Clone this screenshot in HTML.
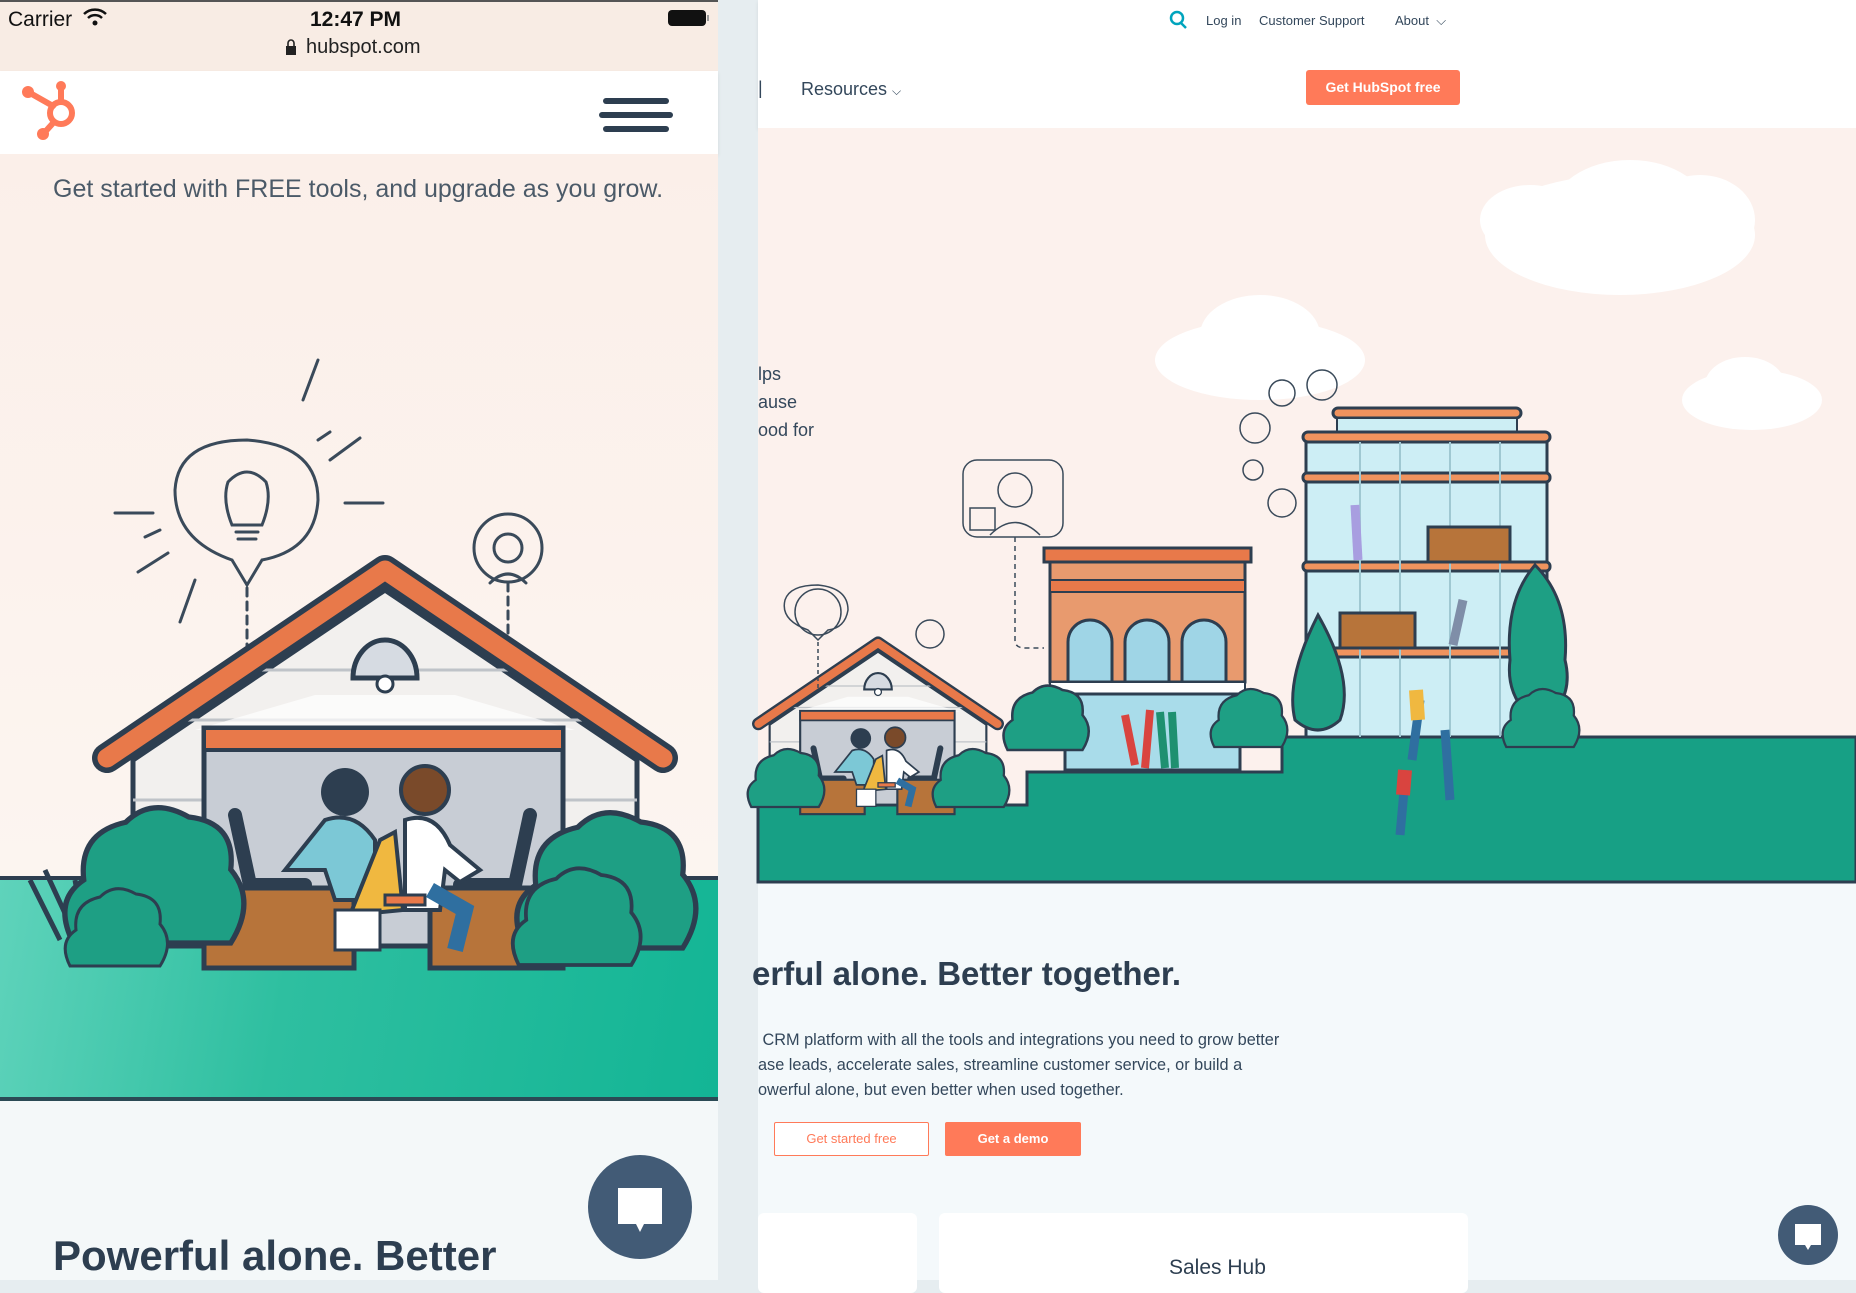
<!DOCTYPE html>
<html><head><meta charset="utf-8"><style>
*{margin:0;padding:0;box-sizing:border-box}
body{width:1856px;height:1280px;overflow:hidden;position:relative;font-family:"Liberation Sans",sans-serif;background:#e6edf0}
.a{position:absolute}
.t{position:absolute;white-space:nowrap}
</style></head><body>
<div class="a" style="left:0;top:0;width:718px;height:71px;background:#f8ece4;border-top:2px solid #555"></div>
<div class="a" style="left:0;top:71px;width:718px;height:83px;background:#fff;box-shadow:0 2px 4px rgba(0,0,0,.08)"></div>
<div class="a" style="left:0;top:154px;width:718px;height:722px;background:linear-gradient(#fbefe9,#fcf5f0)"></div>
<div class="a" style="left:0;top:876px;width:718px;height:225px;background:linear-gradient(100deg,#5fd3bb,#2ebfa0 40%,#13b595);border-top:4px solid #2d3e50;border-bottom:4px solid #2b4a55"></div>
<div class="a" style="left:0;top:1101px;width:718px;height:179px;background:#f4f8f9"></div>
<div class="a" style="left:758px;top:0;width:1098px;height:128px;background:#fff;box-shadow:0 2px 4px rgba(0,0,0,.08)"></div>
<div class="a" style="left:758px;top:128px;width:1098px;height:754px;background:#fcf1ed"></div>
<div class="a" style="left:758px;top:882px;width:1098px;height:398px;background:#f4f9fb"></div>

<svg class="a" style="left:0;top:0" width="1856" height="1280" viewBox="0 0 1856 1280">
<defs>
<g id="house">
 <polygon points="0,20 -252,190 -252,376 252,376 252,190" fill="#f2f0ee" stroke="#2d3e50" stroke-width="5"/>
 <g stroke="#bfc3c8" stroke-width="3"><line x1="-170" y1="100" x2="170" y2="100"/><line x1="-230" y1="150" x2="230" y2="150"/><line x1="-252" y1="230" x2="252" y2="230"/><line x1="-252" y1="290" x2="252" y2="290"/></g>
 <path d="M-70 125 L-190 160 L190 160 L70 125Z" fill="#fff" opacity=".7"/>
 <path d="M-32 108 A32 38 0 0 1 32 108 Z" fill="#d6dbe2" stroke="#2d3e50" stroke-width="5"/>
 <circle cx="0" cy="114" r="8" fill="#fff" stroke="#2d3e50" stroke-width="3"/>
 <rect x="-181" y="158" width="359" height="218" fill="#c8cdd5" stroke="#2d3e50" stroke-width="5"/>
 <rect x="-181" y="158" width="359" height="22" fill="#e8794a" stroke="#2d3e50" stroke-width="4"/>
 <path d="M-150 245 L-135 315 L-80 315" fill="none" stroke="#2d3e50" stroke-width="14" stroke-linecap="round"/>
 <path d="M145 245 L130 315 L75 315" fill="none" stroke="#2d3e50" stroke-width="14" stroke-linecap="round"/>
 <rect x="-181" y="318" width="150" height="80" fill="#b7743a" stroke="#2d3e50" stroke-width="5"/>
 <rect x="45" y="318" width="133" height="80" fill="#b7743a" stroke="#2d3e50" stroke-width="5"/>
 <circle cx="-40" cy="222" r="24" fill="#2d3e50"/>
 <path d="M-60 250 Q-30 240 -10 270 L-10 330 L-50 330 L-60 300 L-100 300 Z" fill="#7cc8d6" stroke="#2d3e50" stroke-width="4"/>
 <path d="M-5 270 L10 262 L18 340 L-35 345 Z" fill="#f0b840" stroke="#2d3e50" stroke-width="4"/>
 <rect x="-50" y="340" width="45" height="40" fill="#fff" stroke="#2d3e50" stroke-width="3"/>
 <circle cx="40" cy="220" r="24" fill="#7a4a2a" stroke="#2d3e50" stroke-width="4"/>
 <path d="M20 250 Q50 240 65 275 L95 300 L75 312 L60 300 L55 340 L20 340 Z" fill="#fff" stroke="#2d3e50" stroke-width="4"/>
 <rect x="0" y="325" width="40" height="10" fill="#e8794a" stroke="#2d3e50" stroke-width="3"/>
 <path d="M45 320 L80 340 L70 380" fill="none" stroke="#2f6fa0" stroke-width="16"/>
 <polyline points="-278,188 0,0 278,188" fill="none" stroke="#2d3e50" stroke-width="30" stroke-linecap="round" stroke-linejoin="round"/>
 <polyline points="-278,188 0,0 278,188" fill="none" stroke="#e8794a" stroke-width="19" stroke-linecap="round" stroke-linejoin="round"/>
</g>
<g id="bush">
 <path d="M-75 60 Q-95 20 -65 0 Q-70 -45 -25 -55 Q0 -80 35 -60 Q80 -55 75 -10 Q100 20 75 60 Z" fill="#1e9f84" stroke="#2d3e50" stroke-width="5"/>
</g>
</defs>

<g fill="none" stroke="#3a4a5a" stroke-width="3" stroke-linecap="round">
 <path d="M247 585 L232 560 Q175 540 175 490 Q178 440 247 440 Q318 445 318 500 Q315 550 262 560 Z"/>
 <path d="M232 525 Q222 500 228 482 Q247 462 266 482 Q272 500 262 525 Z M236 525 h22 M236 532 h22 M238 539 h18"/>
 <line x1="115" y1="513" x2="153" y2="513"/><line x1="345" y1="503" x2="383" y2="503"/>
 <line x1="303" y1="400" x2="318" y2="360"/><line x1="330" y1="460" x2="360" y2="438"/><line x1="318" y1="440" x2="330" y2="432"/>
 <line x1="138" y1="572" x2="168" y2="553"/><line x1="180" y1="622" x2="195" y2="580"/><line x1="145" y1="537" x2="160" y2="530"/>
 <circle cx="508" cy="548" r="34"/>
 <circle cx="508" cy="548" r="14"/><path d="M490 583 Q508 565 526 583"/>
 <line x1="247" y1="588" x2="247" y2="690" stroke-dasharray="8 6"/>
 <line x1="508" y1="583" x2="508" y2="800" stroke-dasharray="8 6"/>
</g>
<use href="#house" transform="translate(385,570)"/>
<path d="M30 880 L60 940 M45 870 L75 935 M75 880 L85 935" stroke="#2d3e50" stroke-width="5" fill="none"/>
<use href="#bush" transform="translate(152,880) scale(1.05)"/>
<use href="#bush" transform="translate(115,930) scale(.6)" />
<use href="#bush" transform="translate(604,885) scale(1.05)"/>
<use href="#bush" transform="translate(575,920) scale(.75)"/>

<g fill="#fff">
 <ellipse cx="1620" cy="235" rx="135" ry="60"/><ellipse cx="1630" cy="215" rx="80" ry="55"/><ellipse cx="1530" cy="220" rx="50" ry="35"/><ellipse cx="1700" cy="220" rx="55" ry="45"/>
 <ellipse cx="1752" cy="400" rx="70" ry="30"/><ellipse cx="1745" cy="385" rx="40" ry="28"/>
 <ellipse cx="1260" cy="360" rx="105" ry="40"/><ellipse cx="1260" cy="335" rx="60" ry="40"/>
</g>
<path d="M758 805 L1027 805 L1027 772 L1282 772 L1282 737 L1856 737 L1856 882 L758 882 Z" fill="#17a085" stroke="#2d3e50" stroke-width="3"/>
<line x1="758" y1="882" x2="1856" y2="882" stroke="#2d3e50" stroke-width="3"/>
<use href="#house" transform="translate(878,643) scale(.43)"/>
<use href="#bush" transform="translate(785,780) scale(.45)"/>
<use href="#bush" transform="translate(970,780) scale(.45)"/>
<g fill="none" stroke="#3a4a5a" stroke-width="1.5">
 <circle cx="818" cy="612" r="23"/><path d="M818 640 L808 630 Q780 620 785 600 Q790 585 818 585 Q848 588 848 610 Q845 628 828 630Z"/>
 <circle cx="930" cy="634" r="14"/>
 <line x1="818" y1="642" x2="818" y2="690" stroke-dasharray="4 3"/>
 <rect x="963" y="460" width="100" height="77" rx="14"/>
 <circle cx="1015" cy="490" r="17"/><path d="M990 535 Q1015 510 1040 535"/>
 <rect x="970" y="508" width="25" height="22"/>
 <path d="M1015 537 L1015 640 Q1015 648 1025 648 L1044 648" stroke-dasharray="5 4"/>
</g>
<rect x="1044" y="548" width="207" height="14" fill="#e8794a" stroke="#2d3e50" stroke-width="3"/>
<rect x="1050" y="562" width="195" height="120" fill="#e89a6e" stroke="#2d3e50" stroke-width="3"/>
<rect x="1050" y="580" width="195" height="12" fill="#e8794a" stroke="#2d3e50" stroke-width="2"/>
<g fill="#9fd5e6" stroke="#2d3e50" stroke-width="3">
 <path d="M1068 682 V642 A22 22 0 0 1 1112 642 V682Z"/>
 <path d="M1125 682 V642 A22 22 0 0 1 1169 642 V682Z"/>
 <path d="M1182 682 V642 A22 22 0 0 1 1226 642 V682Z"/>
</g>
<rect x="1050" y="682" width="195" height="12" fill="#fff" stroke="#2d3e50" stroke-width="2"/>
<rect x="1065" y="694" width="175" height="76" fill="#a9dcea" stroke="#2d3e50" stroke-width="3"/>
<path d="M1125 715 l10 50 M1150 710 l-5 58" stroke="#d9443f" stroke-width="8"/>
<path d="M1160 712 l5 56 M1172 712 l3 56" stroke="#1e9070" stroke-width="8"/>
<rect x="1333" y="408" width="188" height="10" rx="5" fill="#f0935e" stroke="#2d3e50" stroke-width="3"/>
<rect x="1337" y="418" width="180" height="14" fill="#cdeef4" stroke="#2d3e50" stroke-width="2"/>
<rect x="1303" y="432" width="247" height="10" rx="5" fill="#f0935e" stroke="#2d3e50" stroke-width="3"/>
<rect x="1306" y="442" width="241" height="295" fill="#cdeef5" stroke="#2d3e50" stroke-width="3"/>
<g fill="#f0935e" stroke="#2d3e50" stroke-width="3">
 <rect x="1303" y="473" width="247" height="9" rx="4"/>
 <rect x="1303" y="562" width="247" height="9" rx="4"/>
 <rect x="1303" y="648" width="247" height="9" rx="4"/>
</g>
<g stroke="#9fc8d2" stroke-width="2"><line x1="1360" y1="442" x2="1360" y2="737"/><line x1="1400" y1="442" x2="1400" y2="737"/><line x1="1450" y1="442" x2="1450" y2="737"/><line x1="1500" y1="442" x2="1500" y2="737"/></g>
<rect x="1428" y="527" width="82" height="35" fill="#b7743a" stroke="#2d3e50" stroke-width="3"/>
<rect x="1340" y="613" width="75" height="35" fill="#b7743a" stroke="#2d3e50" stroke-width="3"/>
<path d="M1355 505 l3 55" stroke="#a89ee0" stroke-width="9"/>
<path d="M1463 600 l-10 45" stroke="#7f8ea8" stroke-width="9"/>
<path d="M1420 700 l-8 60 M1445 730 l5 70 M1405 780 l-5 55" stroke="#2f6fa0" stroke-width="9"/>
<path d="M1416 690 l2 30" stroke="#f0b840" stroke-width="14"/>
<path d="M1405 770 l-2 25" stroke="#d9443f" stroke-width="14"/>
<path d="M1318 615 Q1355 680 1340 720 Q1318 740 1295 720 Q1285 680 1318 615Z" fill="#1e9f84" stroke="#2d3e50" stroke-width="3"/>
<path d="M1535 565 Q1570 600 1565 660 Q1575 700 1540 725 Q1505 700 1510 660 Q1505 600 1535 565Z" fill="#1e9f84" stroke="#2d3e50" stroke-width="3"/>
<use href="#bush" transform="translate(1045,720) scale(.5)"/>
<use href="#bush" transform="translate(1248,720) scale(.45)"/>
<use href="#bush" transform="translate(1540,720) scale(.45)"/>
<g fill="none" stroke="#3a4a5a" stroke-width="1.5">
 <circle cx="1282" cy="393" r="13"/><circle cx="1255" cy="428" r="15"/><circle cx="1253" cy="470" r="10"/><circle cx="1282" cy="503" r="14"/><circle cx="1322" cy="385" r="15"/>
</g>
<circle cx="640" cy="1207" r="52" fill="#425b76"/>
<path d="M618 1188 h44 v36 h-18 l-4 8 l-4 -8 h-18Z" fill="#fff"/>
<circle cx="1808" cy="1235" r="30" fill="#425b76"/>
<path d="M1795 1224 h26 v21 h-10 l-3 5 l-3 -5 h-10Z" fill="#fff"/>
<g stroke="#ff7a59" stroke-width="6" fill="none" stroke-linecap="round">
 <circle cx="61" cy="113" r="11"/><line x1="61" y1="102" x2="61" y2="87"/><line x1="53" y1="106" x2="30" y2="93"/><line x1="54" y1="122" x2="45" y2="132"/>
</g>
<g fill="#ff7a59"><circle cx="61" cy="86" r="5"/><circle cx="28" cy="92" r="6"/><circle cx="43" cy="134" r="6"/></g>
<g stroke="#2d3e50" stroke-width="6" stroke-linecap="round"><line x1="606" y1="101" x2="666" y2="101"/><line x1="602" y1="115" x2="670" y2="115"/><line x1="606" y1="129" x2="666" y2="129"/></g>
<circle cx="1177" cy="18" r="6" fill="none" stroke="#00a4bd" stroke-width="2.5"/><line x1="1181" y1="23" x2="1186" y2="28" stroke="#00a4bd" stroke-width="2.5"/>
<rect x="668" y="10" width="38" height="16" rx="4" fill="#111"/><rect x="707" y="15" width="2" height="6" fill="#999"/>
<rect x="286" y="46" width="10" height="9" fill="#222"/><path d="M288 46 v-3 a3 3 0 0 1 6 0 v3" stroke="#222" stroke-width="1.6" fill="none"/>
<path d="M84 14 a16 16 0 0 1 22 0 M88 18 a10 10 0 0 1 14 0" stroke="#111" stroke-width="2.5" fill="none"/><circle cx="95" cy="23" r="2.5" fill="#111"/>
<circle cx="1148" cy="1268" r="8" fill="none" stroke="#2d3e50" stroke-width="2.5"/><path d="M1148 1272 l-4 8 h8z" fill="#ff7a59"/>
</svg>

<div class="t" style="left:8px;top:8px;font-size:21px;color:#111">Carrier</div>
<div class="t" style="left:310px;top:8px;font-size:21px;font-weight:bold;color:#111">12:47 PM</div>
<div class="t" style="left:306px;top:36px;font-size:20px;color:#222">hubspot.com</div>
<div class="t" style="left:53px;top:175px;font-size:25px;color:#4b5a68">Get started with FREE tools, and upgrade as you grow.</div>
<div class="t" style="left:53px;top:1232px;font-size:42px;font-weight:bold;color:#2d3e50">Powerful alone. Better</div>

<div class="t" style="left:1206px;top:13px;font-size:13px;color:#33475b">Log in</div>
<div class="t" style="left:1259px;top:13px;font-size:13px;color:#33475b">Customer Support</div>
<div class="t" style="left:1395px;top:13px;font-size:13px;color:#33475b">About &nbsp;⌵</div>
<div class="t" style="left:758px;top:78px;font-size:18px;color:#33475b;overflow:hidden;width:6px">|</div>
<div class="t" style="left:801px;top:79px;font-size:18px;color:#33475b">Resources <span style="font-size:12px">⌵</span></div>
<div class="a" style="left:1306px;top:70px;width:154px;height:35px;background:#ff7a59;border-radius:3px;color:#fff;font-size:14px;font-weight:bold;text-align:center;line-height:35px">Get HubSpot free</div>
<div class="t" style="left:758px;top:360px;font-size:18px;color:#33475b;line-height:28px">lps<br>ause<br>ood for</div>
<div class="t" style="left:752px;top:955px;font-size:33px;font-weight:bold;color:#2d3e50">erful alone. Better together.</div>
<div class="t" style="left:758px;top:1028px;font-size:16.3px;color:#33475b;line-height:25px">&nbsp;CRM platform with all the tools and integrations you need to grow better<br>ase leads, accelerate sales, streamline customer service, or build a<br>owerful alone, but even better when used together.</div>
<div class="a" style="left:774px;top:1122px;width:155px;height:34px;border:1.5px solid #ff7a59;background:#fff;color:#ff7a59;font-size:13px;text-align:center;line-height:31px;border-radius:2px">Get started free</div>
<div class="a" style="left:945px;top:1122px;width:136px;height:34px;background:#ff7a59;color:#fff;font-size:13px;font-weight:bold;text-align:center;line-height:34px;border-radius:2px">Get a demo</div>
<div class="a" style="left:758px;top:1213px;width:159px;height:80px;background:#fff;border-radius:6px"></div>
<div class="a" style="left:939px;top:1213px;width:529px;height:80px;background:#fff;border-radius:6px"></div>
<div class="t" style="left:1169px;top:1256px;font-size:21px;color:#2d3e50">Sales Hub</div>
</body></html>
